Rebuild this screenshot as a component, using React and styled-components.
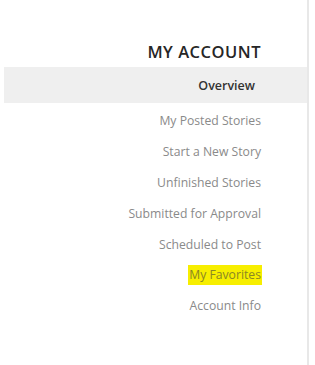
import React from "react";
import styled, { createGlobalStyle } from "styled-components";

const GlobalStyle = createGlobalStyle`
  body {
    margin: 0;
    background: #fff;
    font-family: "Open Sans", "Liberation Sans", sans-serif;
  }
`;

const Sidebar = styled.aside`
  width: 309px;
  height: 365px;
  border-right: 2px solid #e8e8e8;
  box-sizing: border-box;
  padding-top: 41px;
`;

const Heading = styled.h2`
  margin: 0 46px 4px 0;
  text-align: right;
  font-size: 16.5px;
  font-weight: 600;
  letter-spacing: 0.5px;
  line-height: 22px;
  color: #262626;
`;

const Menu = styled.ul`
  list-style: none;
  margin: 0;
  padding: 0;
`;

const Overview = styled.li`
  margin-left: 4px;
  height: 36px;
  display: flex;
  align-items: center;
  justify-content: flex-end;
  padding-right: 52px;
  background: #efefef;
  font-size: 12.5px;
  font-weight: 600;
  color: #333;
  margin-bottom: 3px;
`;

const Item = styled.li`
  height: 30.8px;
  display: flex;
  align-items: center;
  justify-content: flex-end;
  padding-right: 45px;
  font-size: 12.2px;
  color: #8a8a8a;
`;

const Label = styled.span`
  padding: 1px 1px 2px;
  background: ${(p) => (p.$marked ? "#f7ee00" : "transparent")};
  color: ${(p) => (p.$marked ? "#8a8624" : "inherit")};
`;

const links = [
  "My Posted Stories",
  "Start a New Story",
  "Unfinished Stories",
  "Submitted for Approval",
  "Scheduled to Post",
  "My Favorites",
  "Account Info",
];

export default function App() {
  return (
    <>
      <GlobalStyle />
      <Sidebar>
        <Heading>MY ACCOUNT</Heading>
        <Menu>
          <Overview>Overview</Overview>
          {links.map((l) => (
            <Item key={l}>
              <Label $marked={l === "My Favorites"}>{l}</Label>
            </Item>
          ))}
        </Menu>
      </Sidebar>
    </>
  );
}
